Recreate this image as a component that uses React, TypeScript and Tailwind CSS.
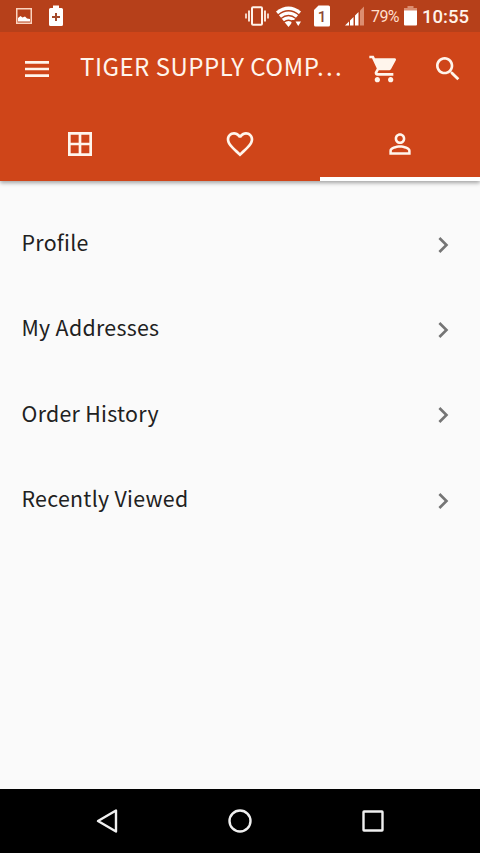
const menuItems = ["Profile", "My Addresses", "Order History", "Recently Viewed"];

const iconPaths = {
    menu: "M3 18h18v-2H3v2zm0-5h18v-2H3v2zm0-7v2h18V6H3z",
    cart: "M7 18c-1.1 0-1.99.9-1.99 2S5.9 22 7 22s2-.9 2-2-.9-2-2-2zM1 2v2h2l3.6 7.59-1.35 2.45c-.16.28-.25.61-.25.96 0 1.1.9 2 2 2h12v-2H7.42c-.14 0-.25-.11-.25-.25l.03-.12.9-1.63h7.45c.75 0 1.41-.41 1.75-1.03l3.58-6.49c.08-.14.12-.31.12-.48 0-.55-.45-1-1-1H5.21l-.94-2H1zm16 16c-1.1 0-1.99.9-1.99 2s.89 2 1.99 2 2-.9 2-2-.9-2-2-2z",
    search: "M15.5 14h-.79l-.28-.27C15.41 12.59 16 11.11 16 9.5 16 5.91 13.09 3 9.5 3S3 5.91 3 9.5 5.91 16 9.5 16c1.61 0 3.09-.59 4.23-1.57l.27.28v.79l5 4.99L20.49 19l-4.99-5zm-6 0C7.01 14 5 11.99 5 9.5S7.01 5 9.5 5 14 7.01 14 9.5 11.99 14 9.5 14z",
    grid: "M3 3v18h18V3H3zm8 16H5v-6h6v6zm0-8H5V5h6v6zm8 8h-6v-6h6v6zm0-8h-6V5h6v6z",
    heart: "M16.5 3c-1.74 0-3.41.81-4.5 2.09C10.91 3.81 9.24 3 7.5 3 4.42 3 2 5.42 2 8.5c0 3.78 3.4 6.86 8.55 11.54L12 21.35l1.45-1.32C18.6 15.36 22 12.28 22 8.5 22 5.42 19.58 3 16.5 3zm-4.4 15.55l-.1.1-.1-.1C7.14 14.24 4 11.39 4 8.5 4 6.5 5.5 5 7.5 5c1.54 0 3.04.99 3.57 2.36h1.87C13.46 5.99 14.96 5 16.5 5c2 0 3.5 1.5 3.5 3.5 0 2.89-3.14 5.74-7.9 10.05z",
    person: "M12 5.9c1.16 0 2.1.94 2.1 2.1s-.94 2.1-2.1 2.1S9.9 9.16 9.9 8s.94-2.1 2.1-2.1m0 9c2.97 0 6.1 1.46 6.1 2.1v1.1H5.9V17c0-.64 3.13-2.1 6.1-2.1M12 4C9.79 4 8 5.79 8 8s1.79 4 4 4 4-1.79 4-4-1.79-4-4-4zm0 9c-2.67 0-8 1.34-8 4v3h16v-3c0-2.66-5.33-4-8-4z",
    chevron: "M10 6L8.59 7.41 13.17 12l-4.58 4.59L10 18l6-6z",
};

function Icon({ name }: { name: keyof typeof iconPaths }) {
    return (
        <svg viewBox="0 0 24 24" fill="currentColor" className="size-8 shrink-0">
            <path d={iconPaths[name]} />
        </svg>
    );
}

function StatusBar() {
    return (
        <div className="flex h-8 items-center bg-[#b6401a] pl-4 pr-[11px] font-['Roboto',sans-serif] text-[#fff3ea]">
            {/* Notifications */}
            <svg viewBox="0 0 16 16" className="size-4">
                <rect x="0.75" y="0.75" width="14.5" height="14.5" fill="none" stroke="#fbd3bf" strokeWidth="1.5" />
                <path d="M2 13.5V10l2.5-2 2 1.5L9 8.5l2 2 3 .5v2.5z" fill="#fff" />
            </svg>
            <svg viewBox="0 0 14 22" className="ml-[17px] h-[22px] w-3.5">
                <path d="M4 0.5h6V3h2.5q1.5 0 1.5 1.5v15q0 1.5-1.5 1.5h-11Q0 21 0 19.5V4.5Q0 3 1.5 3H4z" fill="#fff" />
                <path d="M7 8v8M3 12h8" stroke="#a34a2c" strokeWidth="2" />
            </svg>

            {/* Vibrate */}
            <svg viewBox="0 0 24 20" className="ml-auto h-5 w-6" fill="none" stroke="currentColor">
                <rect x="7" y="1.25" width="10" height="17.5" rx="1" strokeWidth="2" />
                <path d="M4 4.5v11M20 4.5v11" strokeWidth="1.8" />
                <path d="M1 7.5v5M23 7.5v5" strokeWidth="1.6" />
            </svg>
            {/* Wifi */}
            <svg viewBox="0 0 26 22" className="ml-[7px] mt-0.5 h-[22px] w-[26px]">
                <path d="M0 5.5Q12.5-4.5 25 5.5L12.5 21z" fill="#fff" />
                <path d="M2 9Q12.5 .5 23 9M5 12.5Q12.5 6.5 20 12.5M8 16Q12.5 12.5 17 16" fill="none" stroke="#b6401a" strokeWidth="1.4" />
                <path d="M15.5 14h10v7h-10z" fill="#b6401a" />
                <path d="M19.5 15.5h5.5l-2.75 4.5z" fill="#fff" />
            </svg>
            {/* SIM */}
            <svg viewBox="0 0 16 22" className="ml-3 h-[22px] w-4">
                <path d="M4.5 .5h10Q16 .5 16 2v18q0 1.5-1.5 1.5h-13Q0 21.5 0 20V5z" fill="#fff" />
                <text x="8" y="16.5" textAnchor="middle" fontSize="15" fontWeight="500" fill="#8d4934">1</text>
            </svg>
            {/* Signal */}
            <svg viewBox="0 0 20 20" className="ml-[15px] h-5 w-5">
                <path d="M0 19.5l4-4v4zM5 14.5l3.5-3.5v8.5H5zM10 9.5L13.5 6v13.5H10z" fill="#fff" />
                <path d="M15 4.5L19 .5v19h-4z" fill="#dc8d70" />
            </svg>
            <span className="ml-1.5 mt-0.5 w-[29px] whitespace-nowrap text-[16px] leading-none tracking-[-0.6px] text-[#ffdfce]">79%</span>
            {/* Battery */}
            <svg viewBox="0 0 13 20" className="ml-1 h-5 w-[13px]">
                <path d="M3.5 0h6v2H13v3H0V2h3.5z" fill="#dc8d70" />
                <path d="M0 4.5h13v14q0 1-1 1H1q-1 0-1-1z" fill="#fff" />
            </svg>
            <span className="ml-[5px] mt-0.5 w-[47px] whitespace-nowrap text-[18.5px] font-medium leading-none">10:55</span>
        </div>
    );
}

export default function App() {
    const tabClass = "flex flex-1 items-center justify-center";
    return (
        <div className="flex h-[853px] w-[480px] flex-col overflow-hidden bg-[#fafafa] font-['Noto_Sans_CJK_SC',sans-serif]">
            <header className="relative shrink-0 bg-[#cf4519] text-[#fff5ec] shadow-[0_2px_4px_rgba(0,0,0,0.35)]">
                <StatusBar />
                <div className="flex h-[75px] items-center pb-0.5 pl-[21px] pr-4">
                    <Icon name="menu" />
                    <h1 className="-mt-[5px] ml-[27px] w-[270px] whitespace-nowrap text-[24px] leading-8 tracking-[0.5px]">TIGER SUPPLY COMP…</h1>
                    <div className="ml-auto flex gap-8">
                        <Icon name="cart" />
                        <Icon name="search" />
                    </div>
                </div>
                <nav className="flex h-[74px]">
                    <button className={tabClass}><Icon name="grid" /></button>
                    <button className={tabClass}><Icon name="heart" /></button>
                    <button className="flex flex-1 items-center justify-center border-b-4 border-white pt-1"><Icon name="person" /></button>
                </nav>
            </header>

            <main className="flex-1 pt-[21px]">
                <ul>
                    {menuItems.map((item) => (
                        <li key={item} className="flex h-[85.33px] items-center justify-between pl-[21.5px] pr-[21px] text-[#757575]">
                            <span className="-mt-[5px] text-[21.33px] leading-8 tracking-[0.3px] text-[#212121]">{item}</span>
                            <Icon name="chevron" />
                        </li>
                    ))}
                </ul>
            </main>

            {/* System navigation */}
            <footer className="flex h-16 shrink-0 items-center justify-between bg-black px-[91px] text-[#f0f0f0]">
                <svg viewBox="0 0 32 32" className="size-8" fill="none" stroke="currentColor" strokeWidth="2.4">
                    <path d="M25 5.5v21L7 16z" strokeLinejoin="round" />
                </svg>
                <svg viewBox="0 0 32 32" className="size-8" fill="none" stroke="currentColor" strokeWidth="2.4">
                    <circle cx="16" cy="16" r="10.5" />
                </svg>
                <svg viewBox="0 0 32 32" className="size-8" fill="none" stroke="currentColor" strokeWidth="2.4">
                    <rect x="6.5" y="6.5" width="19" height="19" rx="0.5" />
                </svg>
            </footer>
        </div>
    );
}
